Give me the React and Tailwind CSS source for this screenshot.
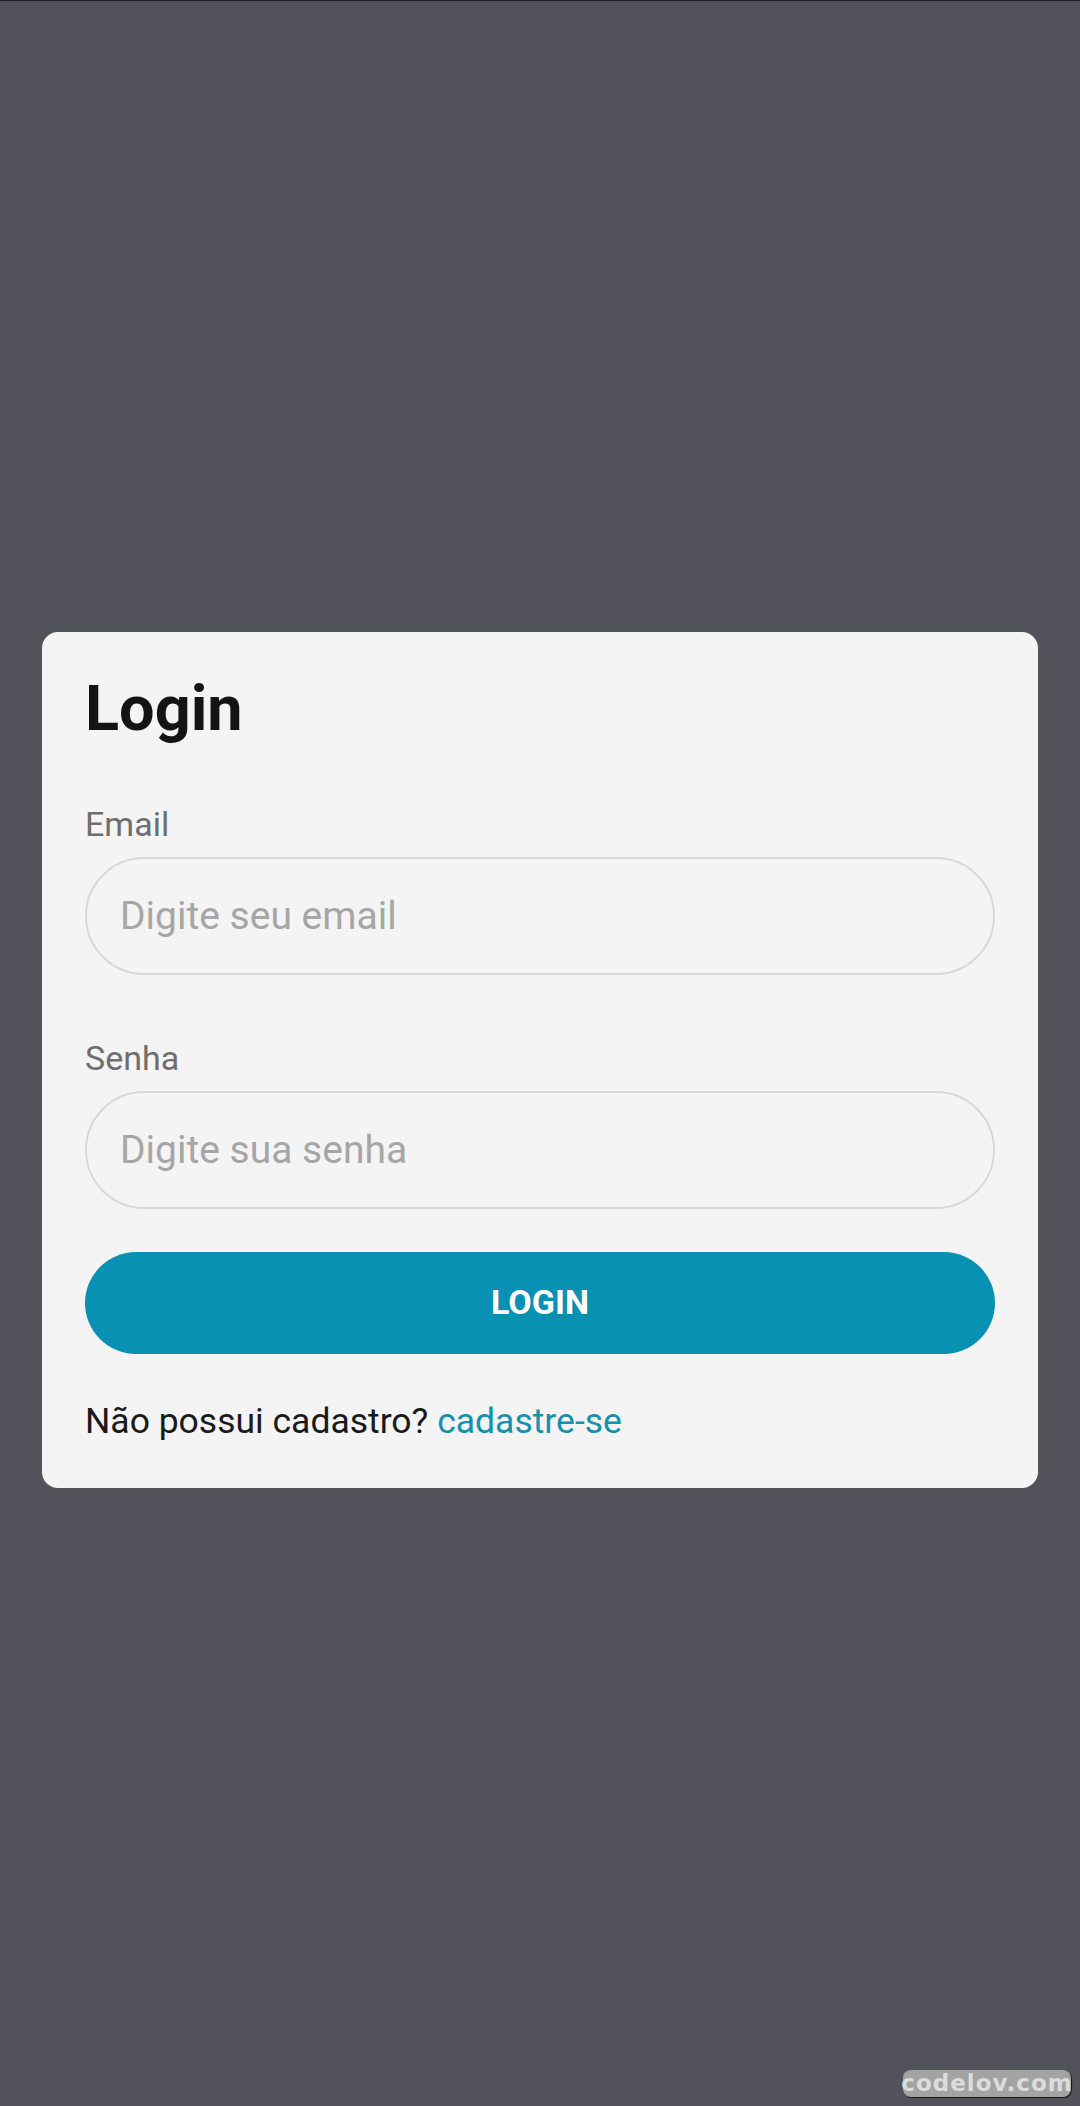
import { useState } from 'react';

export default function App() {
  const [email, setEmail] = useState('');
  const [senha, setSenha] = useState('');

  return (
    <div
      className="relative flex h-[2106px] w-full items-center justify-center border-t border-[#1f1f23] bg-[#52525b] px-[42px] pt-[12px]"
      style={{ fontFamily: 'Roboto, "Noto Sans", sans-serif' }}
    >
      {/* Card */}
      <div className="w-full rounded-[16px] bg-[#f4f4f4] px-[43px] pt-[39px] pb-[46px]">
        <h1 className="text-[63px] font-bold leading-[76px] text-[#141414]">Login</h1>

        <label className="mt-[57px] block text-[34px] leading-[40px] text-[#6e6e6e]">Email</label>
        <input
          type="email"
          value={email}
          onChange={(e) => setEmail(e.target.value)}
          placeholder="Digite seu email"
          className="mt-[13px] block h-[118px] w-full rounded-full border-2 border-[#d8d8d8] bg-transparent px-[33px] text-[39px] text-[#222] outline-none placeholder:text-[#a6a6a6]"
        />

        <label className="mt-[63px] block text-[34px] leading-[40px] text-[#6e6e6e]">Senha</label>
        <input
          type="password"
          value={senha}
          onChange={(e) => setSenha(e.target.value)}
          placeholder="Digite sua senha"
          className="mt-[13px] block h-[118px] w-full rounded-full border-2 border-[#d8d8d8] bg-transparent px-[33px] text-[39px] text-[#222] outline-none placeholder:text-[#a6a6a6]"
        />

        <button className="mt-[43px] flex h-[102px] w-full items-center justify-center rounded-full bg-[#0891b2] text-[34px] font-bold text-white">
          LOGIN
        </button>

        <p className="mt-[46px] text-[35.5px] leading-[42px] text-[#1a1a1a]">
          Não possui cadastro? <a className="text-[#1591ad]">cadastre-se</a>
        </p>
      </div>

      {/* Watermark */}
      <div className="absolute right-[9px] bottom-[9px] flex h-[27px] w-[168px] items-center justify-center rounded-[8px] bg-[#a3a3a3] shadow-[1px_1px_1px_rgba(0,0,0,0.7)]">
        <span
          className="text-[23px] font-bold leading-none tracking-[1px] text-[#dcdcdc]"
          style={{ fontFamily: '"DejaVu Sans", sans-serif' }}
        >
          codelov.com
        </span>
      </div>
    </div>
  );
}
